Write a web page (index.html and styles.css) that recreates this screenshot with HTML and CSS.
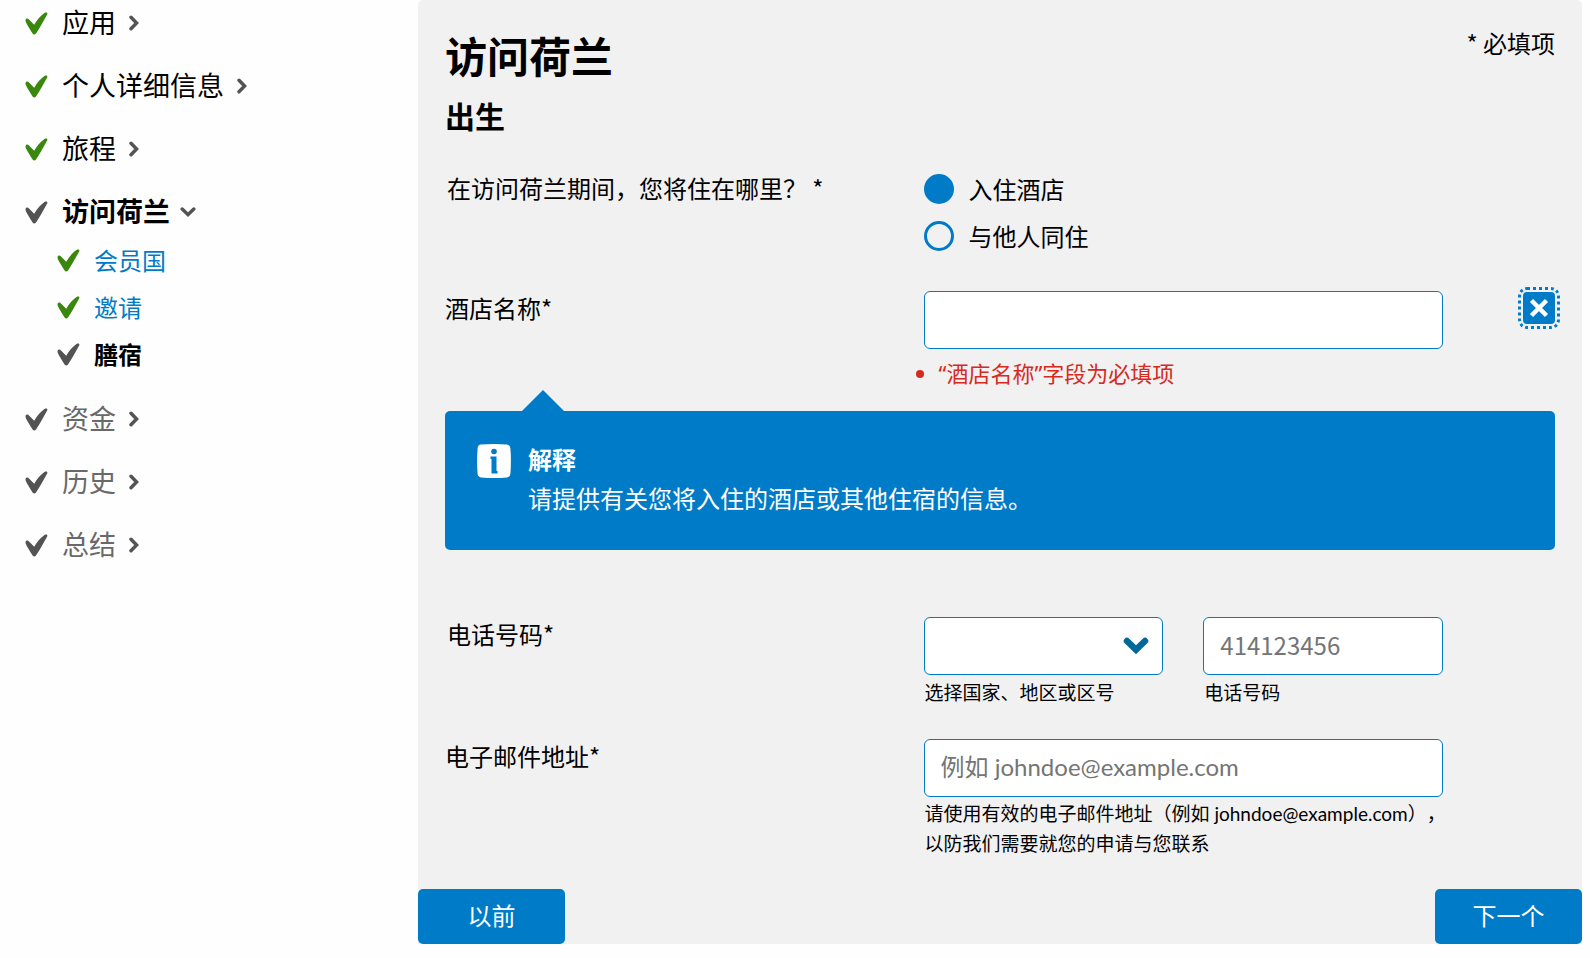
FILE: index.html
```html
<!DOCTYPE html>
<html lang="zh-CN">
<head>
<meta charset="utf-8">
<title>访问荷兰</title>
<link rel="stylesheet" href="styles.css">
</head>
<body>
<svg class="sprite" aria-hidden="true">
  <symbol id="check" viewBox="0 0 23 23"><path d="M.5 8.2C.7 6.400 2.600 5.900 4 7.400L9.200 12.800C12 8 15.500 3.600 19.800.7 21.200 0 22.900.7 22.300 2.200 18.500 9 15 15.600 11 21.500 10 23 8.400 22.900 7.600 21.600 5 17.400 2.600 13.600.7 9.700Z"/></symbol>
  <symbol id="chevron" viewBox="0 0 10 16"><path d="M2 2.200 7.600 8 2 13.800" fill="none" stroke="currentColor" stroke-width="3.400" stroke-linecap="round"/></symbol>
</svg>
<div class="page">
  <nav class="steps" aria-label="步骤">
    <ul class="step-list">
      <li><a class="step done" href="#"><svg class="check"><use href="#check"/></svg><span>应用</span><svg class="chevron"><use href="#chevron"/></svg></a></li>
      <li><a class="step done" href="#"><svg class="check"><use href="#check"/></svg><span>个人详细信息</span><svg class="chevron"><use href="#chevron"/></svg></a></li>
      <li><a class="step done" href="#"><svg class="check"><use href="#check"/></svg><span>旅程</span><svg class="chevron"><use href="#chevron"/></svg></a></li>
      <li>
        <a class="step current" href="#"><svg class="check"><use href="#check"/></svg><span>访问荷兰</span><svg class="chevron open"><use href="#chevron"/></svg></a>
        <ul class="substep-list">
          <li><a class="substep done" href="#"><svg class="check"><use href="#check"/></svg><span>会员国</span></a></li>
          <li><a class="substep done" href="#"><svg class="check"><use href="#check"/></svg><span>邀请</span></a></li>
          <li><a class="substep current" href="#" aria-current="step"><svg class="check"><use href="#check"/></svg><span>膳宿</span></a></li>
        </ul>
      </li>
      <li><a class="step pending" href="#"><svg class="check"><use href="#check"/></svg><span>资金</span><svg class="chevron"><use href="#chevron"/></svg></a></li>
      <li><a class="step pending" href="#"><svg class="check"><use href="#check"/></svg><span>历史</span><svg class="chevron"><use href="#chevron"/></svg></a></li>
      <li><a class="step pending" href="#"><svg class="check"><use href="#check"/></svg><span>总结</span><svg class="chevron"><use href="#chevron"/></svg></a></li>
    </ul>
  </nav>
  <main class="panel">
    <form class="form" novalidate>
      <div class="form-body">
        <header class="heading">
          <div>
            <h1>访问荷兰</h1>
            <h2>出生</h2>
          </div>
          <p class="required-note">* 必填项</p>
        </header>

        <div class="row stay-row" role="radiogroup" aria-labelledby="stay-label">
          <span class="label group-label" id="stay-label">在访问荷兰期间，您将住在哪里？&nbsp;*</span>
          <div class="field">
            <label class="choice"><input type="radio" name="stay" checked><span>入住酒店</span></label>
            <label class="choice"><input type="radio" name="stay"><span>与他人同住</span></label>
          </div>
        </div>

        <div class="row hotel-row">
          <label class="label" for="hotel">酒店名称*</label>
          <div class="field">
            <input class="control" id="hotel" type="text" aria-describedby="hotel-error">
            <ul class="errors" id="hotel-error"><li>“酒店名称”字段为必填项</li></ul>
          </div>
          <button class="close" type="button" aria-label="关闭解释">
            <svg viewBox="0 0 32 32"><path d="M8.500 8.500 23.500 23.500M23.500 8.500 8.500 23.500" fill="none" stroke="currentColor" stroke-width="4.500"/></svg>
          </button>
        </div>

        <section class="explanation">
          <svg class="info" viewBox="0 0 34 34" aria-hidden="true">
            <path d="M4 .6Q17-.4 30 .6 33 1 33.400 4 34.400 17 33.400 30 33 33 30 33.400 17 34.400 4 33.400 1 33 .6 30-.4 17 .6 4 1 1 4 .6Z" fill="#fff"/>
            <circle cx="17" cy="7.500" r="2.800" fill="#007bc7"/>
            <path d="M13.500 12.500h6V27h1v2.500h-6V15h-1z" fill="#007bc7"/>
          </svg>
          <div>
            <h3>解释</h3>
            <p>请提供有关您将入住的酒店或其他住宿的信息。</p>
          </div>
        </section>

        <div class="row phone-row" role="group" aria-labelledby="phone-label">
          <span class="label group-label" id="phone-label">电话号码*</span>
          <div class="field phone-fields">
            <div>
              <div class="select-wrap">
                <select class="control" id="country"><option value=""></option></select>
                <svg class="arrow" viewBox="0 0 26 18" aria-hidden="true"><path d="M4 4 13 12.800 22 4" fill="none" stroke="#01689b" stroke-width="6.500" stroke-linecap="round"/></svg>
              </div>
              <label class="hint" for="country">选择国家、地区或区号</label>
            </div>
            <div>
              <input class="control" id="phone" type="tel" placeholder="414123456">
              <label class="hint" for="phone">电话号码</label>
            </div>
          </div>
        </div>

        <div class="row email-row">
          <label class="label" for="email">电子邮件地址*</label>
          <div class="field email-field">
            <input class="control" id="email" type="email" placeholder="例如 johndoe@example.com" aria-describedby="email-hint">
            <p class="hint" id="email-hint">请使用有效的电子邮件地址（例如 johndoe@example.com），<br>以防我们需要就您的申请与您联系</p>
          </div>
        </div>
      </div>
      <div class="actions">
        <button class="action" type="button">以前</button>
        <button class="action" type="submit">下一个</button>
      </div>
    </form>
  </main>
</div>
</body>
</html>
```
FILE: styles.css
```css
* {
  box-sizing: border-box;
}

body {
  margin: 0;
  background: #fefefe;
  color: #000;
  font: 24px/36px "Noto Sans CJK SC", "Noto Sans", sans-serif;
  text-spacing-trim: space-all;
}

h1, h2, h3, p, ul {
  margin: 0;
  padding: 0;
}

ul {
  list-style: none;
}

a {
  color: inherit;
  text-decoration: none;
}

button, input, select {
  margin: 0;
  font: inherit;
}

svg {
  display: block;
  flex: none;
}

.sprite {
  position: absolute;
  width: 0;
  height: 0;
}

.page {
  display: flex;
  padding-right: 8px;
}

/* Step navigation */
.steps {
  flex: 0 0 418px;
  padding: 6px 16px 0 25px;
}

.step-list {
  display: flex;
  flex-direction: column;
  gap: 31px;
}

.step {
  display: flex;
  align-items: center;
  font-size: 27px;
  line-height: 32px;
}

.check {
  width: 23px;
  height: 23px;
  margin: 2px 14px 0 0;
  fill: #535353;
}

.done .check {
  fill: #39870c;
}

.chevron {
  width: 10px;
  height: 16px;
  margin: 2px 0 0 13px;
  color: #535353;
}

.chevron.open {
  transform: rotate(90deg);
}

.current {
  font-weight: 700;
}

.pending {
  color: #696969;
}

.substep-list {
  padding: 9px 0 0 32px;
  margin-bottom: -6px;
}

.substep {
  display: flex;
  align-items: center;
  line-height: 47px;
}

.substep.done {
  color: #007bc7;
}

/* Form panel */
.panel {
  flex: 1;
  min-width: 0;
  background: #f1f1f1;
  border-radius: 5px 5px 0 0;
}

.form-body {
  padding: 25px 27px 30px;
}

.heading {
  display: flex;
  justify-content: space-between;
}

h1, h2 {
  line-height: 60px;
}

h1 {
  font-size: 42px;
}

h2 {
  font-size: 30px;
}

.row {
  display: grid;
  grid-template-columns: 479fr 520fr 112fr;
  align-items: start;
}

.field {
  min-width: 0;
}

.label {
  line-height: 34px;
}

.group-label {
  padding-left: 2px;
}

.stay-row {
  margin-top: 20px;
}

.stay-row .label {
  padding-top: 6px;
}

.choice {
  display: flex;
  align-items: center;
  gap: 15px;
  line-height: 47px;
}

.choice input {
  appearance: none;
  width: 30px;
  height: 30px;
  border: 3px solid #007bc7;
  border-radius: 50%;
}

.choice input:checked {
  background: #007bc7;
}

.hotel-row {
  margin-top: 32px;
}

.control {
  display: block;
  width: 100%;
  height: 58px;
  padding: 0 16px 4px;
  border: 1px solid #007bc7;
  border-radius: 6px;
  background: #fff;
  color: #000;
}

.control::placeholder {
  color: #757575;
  opacity: 1;
}

.errors {
  margin: 6px 0 0 15px;
  color: #d52b1e;
  font-family: "Noto Sans", "Noto Sans CJK SC", sans-serif;
  font-size: 22px;
  list-style: disc;
}

.close {
  justify-self: end;
  width: 32px;
  height: 32px;
  margin-top: 1px;
  padding: 0;
  border: 0;
  border-radius: 4px;
  background: #007bc7;
  color: #fff;
  outline: 3px dotted #007bc7;
  outline-offset: 2px;
}

.explanation {
  position: relative;
  display: flex;
  gap: 17px;
  margin-top: 20px;
  padding: 28px 32px 33px;
  border-radius: 5px;
  background: #007bc7;
  color: #fff;
  line-height: 39px;
}

.explanation::before {
  content: "";
  position: absolute;
  bottom: 100%;
  left: 77px;
  border: solid transparent;
  border-width: 0 21px 21px;
  border-bottom-color: #007bc7;
}

.explanation h3 {
  font-size: 24px;
}

.info {
  width: 34px;
  height: 34px;
  margin-top: 5px;
}

.phone-row {
  margin-top: 67px;
}

.phone-fields {
  display: grid;
  grid-template-columns: 1fr 1fr;
  gap: 40px;
}

.select-wrap {
  position: relative;
}

.select-wrap select {
  appearance: none;
}

.arrow {
  position: absolute;
  top: 20px;
  right: 14px;
  width: 26px;
  height: 18px;
  pointer-events: none;
}

.hint {
  display: block;
  margin-top: 2px;
  padding-left: 1px;
  font-size: 19px;
  line-height: 30px;
  white-space: nowrap;
}

.email-row {
  margin-top: 32px;
}

.email-field {
  font-family: Lato, "Noto Sans CJK SC", sans-serif;
}

.actions {
  display: flex;
  justify-content: space-between;
}

.action {
  width: 147px;
  height: 55px;
  padding: 0 0 3px;
  border: 0;
  border-radius: 5px;
  background: #007bc7;
  color: #fff;
}
```
